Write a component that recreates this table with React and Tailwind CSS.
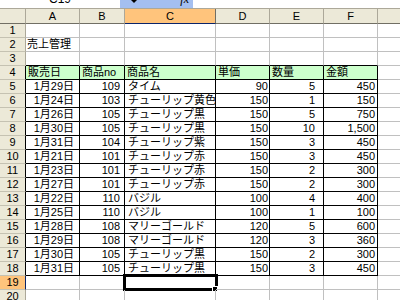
import React from 'react';
import clsx from 'clsx';

// column widths A..F (right gridline included)
const COLS = [
  { key: 'A', w: 'w-[54px]' },
  { key: 'B', w: 'w-[45px]' },
  { key: 'C', w: 'w-[91px]' },
  { key: 'D', w: 'w-[54px]' },
  { key: 'E', w: 'w-[54px]' },
  { key: 'F', w: 'w-[54px]' },
];

// per-column alignment for the data block
const ALIGN = [
  'justify-end pr-[5px]',
  'justify-end pr-[4px]',
  'justify-start pl-[3px]',
  'justify-end pr-[1px]',
  'justify-end pr-[8px]',
  'justify-end pr-[2px]',
];

const HEAD = ['販売日', '商品no', '商品名', '単価', '数量', '金額'];

const SALES = [
  ['1月29日', '109', 'タイム', '90', '5', '450'],
  ['1月24日', '103', 'チューリップ黄色', '150', '1', '150'],
  ['1月26日', '105', 'チューリップ黒', '150', '5', '750'],
  ['1月30日', '105', 'チューリップ黒', '150', '10', '1,500'],
  ['1月31日', '104', 'チューリップ紫', '150', '3', '450'],
  ['1月21日', '101', 'チューリップ赤', '150', '3', '450'],
  ['1月23日', '101', 'チューリップ赤', '150', '2', '300'],
  ['1月27日', '101', 'チューリップ赤', '150', '2', '300'],
  ['1月22日', '110', 'バジル', '100', '4', '400'],
  ['1月25日', '110', 'バジル', '100', '1', '100'],
  ['1月28日', '108', 'マリーゴールド', '120', '5', '600'],
  ['1月29日', '108', 'マリーゴールド', '120', '3', '360'],
  ['1月30日', '105', 'チューリップ黒', '150', '2', '300'],
  ['1月31日', '105', 'チューリップ黒', '150', '3', '450'],
];

const ROWS = Array.from({ length: 20 }, (_, i) => i + 1);

function cellText(row, col) {
  if (row === 2 && col === 0) return '売上管理';
  if (row === 4) return HEAD[col];
  if (row >= 5 && row <= 18) return SALES[row - 5][col];
  return '';
}

const FormulaBar = () => (
  <div className="flex h-[9px] border-b border-[#aca899] bg-white">
    <div className="flex h-full w-[120px] items-end justify-center overflow-hidden">
      <span className="mb-[3px] text-[12px] leading-[12px]">C19</span>
    </div>
    <div className="relative h-full w-[73px] overflow-hidden bg-[#a4bff0]">
      <svg className="absolute left-[11px] top-0" width="6" height="4" viewBox="0 0 6 4">
        <path d="M0 0h6L3 3z" fill="#000" />
      </svg>
      <span className="absolute right-[4px] -top-[7px] font-['Liberation_Serif',serif] text-[12px] italic leading-[12px]">fx</span>
    </div>
    <div className="flex-1" />
  </div>
);

const ColumnHeaders = () => (
  <div className="flex h-[15px]">
    <div className="h-full w-[26px] shrink-0 border-r border-b border-r-[#aca899] border-b-[#716f64] bg-[#ece9d8]" />
    {COLS.map((c) => (
      <div
        key={c.key}
        className={clsx(
          'flex h-full shrink-0 items-center justify-center border-r border-b text-[11px]',
          c.w,
          c.key === 'C'
            ? 'border-r-[#716f64] border-b-[#0a246a] bg-[#ffc47c]'
            : 'border-r-[#aca899] border-b-[#716f64] bg-[#ece9d8]'
        )}
      >
        {c.key}
      </div>
    ))}
    <div className="h-full flex-1 border-b border-[#716f64] bg-[#ece9d8]" />
  </div>
);

const SheetRow = ({ row }) => {
  const inTable = row >= 4 && row <= 18;
  const current = row === 19;
  return (
    <div className="flex h-[14px]">
      <div
        className={clsx(
          'flex h-full w-[26px] shrink-0 items-center justify-center border-r border-b border-b-[#c5c2b2] text-[11px]',
          current ? 'border-r-[#0a246a] bg-[#ffc47c]' : 'bg-[#ece9d8]',
          !current && (inTable ? 'border-r-black' : 'border-r-[#aca899]')
        )}
      >
        {row}
      </div>
      {COLS.map((c, i) => (
        <div
          key={c.key}
          className={clsx(
            'relative flex h-full shrink-0 items-center whitespace-nowrap border-r border-b text-[11px]',
            c.w,
            row === 2 && i === 0 ? 'overflow-visible' : 'overflow-hidden',
            inTable ? 'border-black' : 'border-r-[#c0c0c0]',
            !inTable && (row === 3 ? 'border-b-black' : 'border-b-[#c0c0c0]'),
            row === 4 ? 'justify-start pl-[2px] bg-[#ccffcc]' : ALIGN[i],
            row === 2 && 'justify-start pl-[1px]',
            current && i === 2 && 'overflow-visible'
          )}
        >
          <span>{cellText(row, i)}</span>
          {current && i === 2 && (
            <>
              {/* active cell frame and fill handle */}
              <div className="absolute -left-[2px] -top-[2px] h-[17px] w-[95px] border-[3px] border-black" />
              <div className="absolute left-[87px] top-[10px] h-[6px] w-[6px] border border-white bg-black" />
            </>
          )}
        </div>
      ))}
      <div className="h-full flex-1 border-b border-[#c0c0c0]" />
    </div>
  );
};

export default function App() {
  return (
    <div className="h-[300px] w-[400px] overflow-hidden bg-white font-['Liberation_Sans','Noto_Sans_CJK_JP',sans-serif] text-black">
      <FormulaBar />
      <ColumnHeaders />
      {ROWS.map((r) => (
        <SheetRow key={r} row={r} />
      ))}
    </div>
  );
}
